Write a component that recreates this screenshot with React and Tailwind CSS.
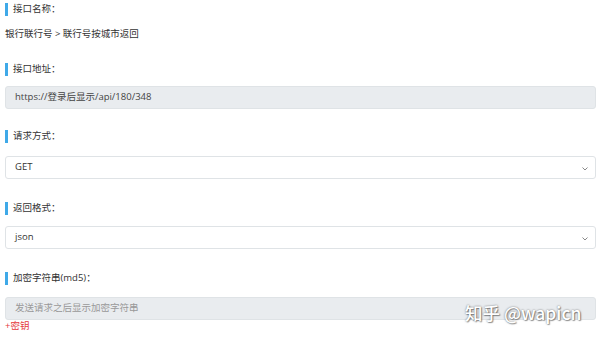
export default function App() {
  const font = { fontFamily: '"Open Sans", "Noto Sans CJK SC", sans-serif' };
  const Label = ({ children }) => (
    <div className="flex items-center h-[16px]">
      <span className="w-[3px] h-[13px] bg-[#3fa9e8] mr-[5px]" />
      <span className="text-[9.5px] text-[#333]">{children}</span>
    </div>
  );
  const Chevron = () => (
    <svg width="8" height="6" viewBox="0 0 8 6" className="absolute right-[6px] top-[9px]">
      <path d="M1.5 1.5 L4 4 L6.5 1.5" fill="none" stroke="#888" strokeWidth="1" />
    </svg>
  );
  return (
    <div className="w-[600px] h-[340px] bg-white overflow-hidden relative px-[5px] pt-[1px]" style={font}>
      <Label>接口名称：</Label>
      <div className="text-[9.5px] text-[#333] mt-[9px] h-[16px] leading-[16px]">银行联行号 &gt; 联行号按城市返回</div>
      <div className="mt-[19px]"><Label>接口地址：</Label></div>
      <div className="mt-[9px] w-[591px] h-[23px] rounded-[3px] border border-[#dfe3e6] bg-[#e9ecef] flex items-center pl-[9px] text-[9.5px] text-[#444]">
        https://登录后显示/api/180/348
      </div>
      <div className="mt-[19px]"><Label>请求方式：</Label></div>
      <div className="mt-[12px] w-[591px] h-[23px] rounded-[3px] border border-[#dfe3e6] bg-white flex items-center pl-[9px] text-[9.5px] text-[#333] relative">
        GET
        <Chevron />
      </div>
      <div className="mt-[21px]"><Label>返回格式：</Label></div>
      <div className="mt-[10px] w-[591px] h-[23px] rounded-[3px] border border-[#dfe3e6] bg-white flex items-center pl-[9px] text-[9.5px] text-[#333] relative">
        json
        <Chevron />
      </div>
      <div className="mt-[21px]"><Label>加密字符串(md5)：</Label></div>
      <div className="mt-[11px] w-[591px] h-[23px] rounded-[3px] border border-[#dfe3e6] bg-[#e9ecef] flex items-center pl-[9px] text-[9.5px] text-[#999]">
        发送请求之后显示加密字符串
      </div>
      <div className="text-[9.5px] text-[#e5393c] leading-[12px] mt-[0px]">+密钥</div>
      <div
        className="absolute left-[465px] top-[300px] text-[17.5px] text-white font-medium"
        style={{ textShadow: '0 0 2px rgba(0,0,0,0.55), 1px 1px 1px rgba(0,0,0,0.35)', fontFamily: '"Noto Sans CJK SC", sans-serif' }}
      >
        知乎 @wapicn
      </div>
    </div>
  );
}
